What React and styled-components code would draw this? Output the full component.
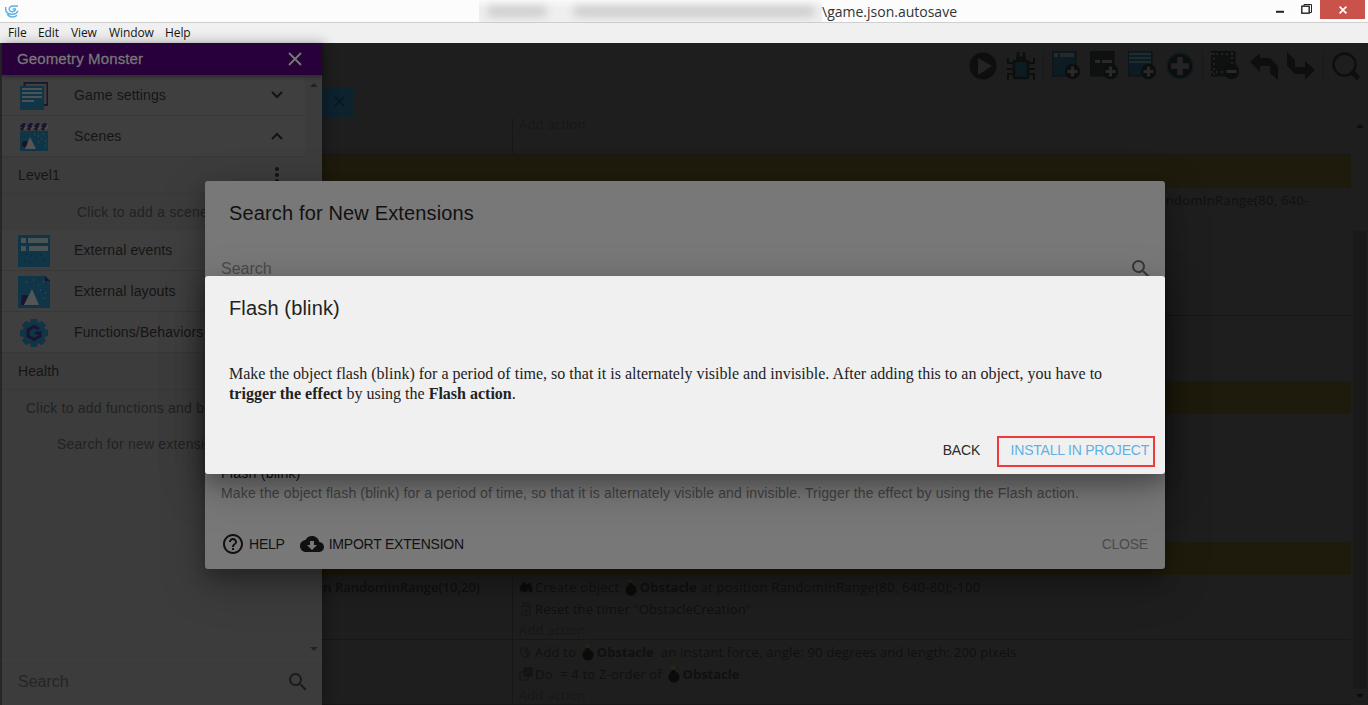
import React from 'react';
import styled, { createGlobalStyle } from 'styled-components';

const sans = '"Liberation Sans", Arial, sans-serif';
const serif = '"Liberation Serif", "Times New Roman", serif';
const ui = '"Open Sans", "Noto Sans", sans-serif';

const Global = createGlobalStyle`
  * { box-sizing: border-box; }
  body { margin: 0; background: #1e1e1e; overflow: hidden; }
  button { font: inherit; border: 0; padding: 0; background: none; }
`;

const Window = styled.div`
  position: relative;
  width: 1368px;
  height: 705px;
  display: flex;
  flex-direction: column;
  overflow: hidden;
  font-family: ${sans};
`;
const TitleBar = styled.header`
  height: 22px;
  flex: none;
  display: flex;
  align-items: flex-start;
  background: #fcfcfc;
  padding-left: 5px;
`;
const LogoSlot = styled.div`
  width: 474px;
  padding-top: 5px;
  svg { display: block; }
`;
const HiddenPath = styled.div`
  width: 343px;
  height: 23px;
  display: flex;
  align-items: center;
  gap: 26px;
  padding-left: 8px;
  background: linear-gradient(#fafafa, #efefef 35%, #efefef);
  overflow: hidden;
`;
const Smudge = styled.span`
  width: ${(p) => p.$w}px;
  height: 11px;
  border-radius: 5px;
  background: #cdcdcd;
  filter: blur(4px);
`;
const FileName = styled.span`
  flex: 1;
  font: 14px/23px ${ui};
  color: #333;
  white-space: nowrap;
`;
const WindowButtons = styled.div`
  display: flex;
  svg { display: block; }
`;
const CloseButton = styled.button`
  width: 45px;
  height: 19px;
  margin-right: 3px;
  display: flex;
  align-items: center;
  justify-content: center;
  background: #c9524a;
`;
const MenuBar = styled.nav`
  height: 21px;
  flex: none;
  display: flex;
  background: #f0f0f0;
  border-top: 1px solid #cfcfcf;
  padding-left: 8px;
`;
const MenuItem = styled.span`
  width: ${(p) => p.$w}px;
  font: 12px/19px ${ui};
  letter-spacing: -0.1px;
  color: #161616;
`;

const Editor = styled.main`
  flex: 1;
  display: flex;
  flex-direction: column;
  background: #1e1e1e;
`;
const Toolbar = styled.div`
  height: 44px;
  flex: none;
  display: flex;
  align-items: center;
  justify-content: flex-end;
  padding: 1px 8px 0 0;
  svg { display: block; }
`;
const Tool = styled.span`
  width: ${(p) => p.$w || 38}px;
`;
const Divider = styled.span`
  width: 1px;
  height: 31px;
  margin: 0 ${(p) => p.$r}px 0 ${(p) => p.$l}px;
  background: #191919;
`;
const TabStrip = styled.div`
  height: 31px;
  flex: none;
  padding-left: 322px;
`;
const Tab = styled.div`
  width: 32px;
  height: 30px;
  padding: 9px 0 0 12px;
  background: #0c222d;
  svg { display: block; }
`;
const SheetArea = styled.div`
  flex: 1;
  display: flex;
  min-height: 0;
`;
const Sheet = styled.div`
  width: 1351px;
  display: flex;
  flex-direction: column;
`;
const Band = styled.div`
  height: 33px;
  flex: none;
  background: #1f1b0c;
`;
const EventRow = styled.div`
  height: ${(p) => p.$h}px;
  flex: none;
  display: flex;
  border-bottom: 1px solid ${(p) => (p.$line ? '#171717' : 'transparent')};
  font: 13px/22px ${ui};
  color: #101010;
`;
const Conditions = styled.div`
  width: 513px;
  flex: none;
  border-right: 1px solid #171717;
  padding: 1px 32px 0 0;
  text-align: right;
  font-weight: 600;
`;
const Actions = styled.div`
  flex: 1;
  padding: ${(p) => p.$top || 0}px 0 0 6px;
`;
const Action = styled.div`
  height: 22px;
  display: flex;
  align-items: center;
  white-space: pre;
  letter-spacing: ${(p) => p.$ls || 0}px;
  padding-left: ${(p) => p.$indent || 0}px;
  svg { display: block; flex: none; }
  b { font-weight: 700; letter-spacing: 0; }
`;
const AddAction = styled.div`
  height: 21px;
  line-height: ${(p) => p.$lh || 21}px;
  color: #171717;
  letter-spacing: 0.2px;
`;
const Scrollbar = styled.div`
  flex: 1;
  display: flex;
  flex-direction: column;
  align-items: center;
  padding: 5px 0 5px 0;
`;
const Thumb = styled.div`
  width: 13px;
  height: 458px;
  margin: 103px 0 5px;
  background: #191919;
`;

const Drawer = styled.aside`
  position: absolute;
  left: 0;
  top: 43px;
  width: 322px;
  height: 662px;
  display: flex;
  flex-direction: column;
  border-left: 2px solid #272727;
  background: #3c3c3c;
  box-shadow: 3px 0 12px rgba(0, 0, 0, 0.3);
`;
const DrawerHeader = styled.div`
  height: 32px;
  flex: none;
  display: flex;
  align-items: center;
  justify-content: space-between;
  padding: 0 20px 0 15px;
  background: #28003a;
  box-shadow: 0 2px 4px rgba(0, 0, 0, 0.35);
  color: #777;
  font-size: 15px;
  line-height: 17px;
  letter-spacing: 0.12px;
  -webkit-text-stroke: 0.3px #777;
  z-index: 1;
  svg { display: block; }
`;
const DrawerTitle = styled.span`
  padding-bottom: 2px;
`;
const DrawerBody = styled.div`
  height: 584px;
  flex: none;
  display: flex;
`;
const List = styled.div`
  width: 303px;
`;
const ListScroll = styled.div`
  flex: 1;
  display: flex;
  flex-direction: column;
  justify-content: space-between;
  align-items: center;
  padding: 7px 0 7px;
`;
const Section = styled.div`
  height: 41px;
  display: flex;
  align-items: center;
  background: #3f3f3f;
  border-bottom: 1px solid #383838;
  padding: 0 22px 0 16px;
  font-size: 14px;
  letter-spacing: 0.13px;
  color: #151515;
  svg { display: block; }
`;
const SectionIcon = styled.span`
  width: 56px;
  padding-top: 2px;
  padding-left: ${(p) => p.$inset || 0}px;
`;
const SectionLabel = styled.span`
  flex: 1;
  white-space: nowrap;
`;
const Item = styled.div`
  height: 37px;
  display: flex;
  align-items: center;
  justify-content: space-between;
  padding: 0 26px 0 16px;
  border-bottom: 1px solid #383838;
  font-size: 14px;
  letter-spacing: 0.1px;
  color: #151515;
`;
const Hint = styled.div`
  height: 36px;
  line-height: 37px;
  padding-left: ${(p) => p.$x}px;
  font-size: 14px;
  letter-spacing: ${(p) => p.$ls || 0.25}px;
  color: #222;
  white-space: nowrap;
  overflow: hidden;
`;
const DrawerSearch = styled.div`
  flex: 1;
  display: flex;
  align-items: center;
  justify-content: space-between;
  padding: 0 12px 2px 16px;
  border-top: 1px solid #404040;
  font-size: 16px;
  color: #252525;
`;

const Dialog = styled.section`
  position: absolute;
  left: 205px;
  top: ${(p) => p.$top}px;
  width: 960px;
  height: ${(p) => p.$h}px;
  display: flex;
  flex-direction: column;
  border-radius: 3px;
  background: ${(p) => p.$bg};
  box-shadow: 0 14px 45px rgba(0, 0, 0, 0.25), 0 10px 18px rgba(0, 0, 0, 0.22);
`;
const DialogTitle = styled.h3`
  margin: 0;
  padding: 16px 24px 0;
  font-size: 20px;
  line-height: 32px;
  font-weight: 400;
  color: ${(p) => p.$c};
  letter-spacing: 0.15px;
`;
const SearchField = styled.div`
  display: flex;
  align-items: center;
  justify-content: space-between;
  height: 24px;
  margin-top: 28px;
  padding: 0 12px 0 16px;
  font-size: 16px;
  color: #4a4a4a;
  svg { display: block; }
`;
const Result = styled.div`
  margin-top: 182px;
  padding-left: 16px;
  line-height: 20px;
`;
const ResultName = styled.div`
  font-size: 14px;
  letter-spacing: 0.27px;
  color: #111;
`;
const ResultText = styled.div`
  font-size: 14px;
  letter-spacing: 0.144px;
  color: #414141;
`;
const Footer = styled.div`
  display: flex;
  align-items: center;
  margin-top: auto;
  height: 36px;
  margin-bottom: 7px;
  padding: 0 17px 0 16px;
  font-size: 14px;
  color: #111;
  svg { display: block; }
`;
const FlatButton = styled.button`
  display: flex;
  align-items: center;
  gap: ${(p) => p.$gap || 0}px;
  margin-left: ${(p) => p.$ml || 0};
  letter-spacing: -0.22px;
  color: ${(p) => p.$c || '#111'};
  white-space: nowrap;
`;
const Description = styled.p`
  margin: 40px 24px 0;
  font: 16px/20px ${serif};
  color: #222;
`;
const ConfirmBar = styled.div`
  display: flex;
  align-items: flex-start;
  justify-content: flex-end;
  margin-top: auto;
  padding: 0 10px 7px 0;
  gap: 17px;
  font-size: 14px;
  line-height: 28px;
`;
const Highlight = styled.div`
  width: 158px;
  height: 31px;
  display: flex;
  align-items: center;
  justify-content: flex-end;
  border: 2px solid #ee3a3a;
  padding: 0 4px 3px 0;
`;

const Gdevelop = () => (
  <svg width="14" height="13" viewBox="0 0 14 13" fill="none" stroke="#5fb0e6" strokeWidth="1.5">
    <path d="M13 1H8C5.400 1 4 2.600 4.300 4.500 4.600 6.400 6.500 7 8.200 6.600 9.800 6.200 10.400 5.200 10.300 3.900H7.600" />
    <path d="M.8 2C-.2 6.500 2.500 9 6.500 9.300c3 .2 5.600-1 6.300-3.500M2.200 9c2.200 3.600 7 4 9.800 1.300" />
  </svg>
);
const Minimize = () => <svg width="29" height="20"><path d="M4 11.800h8" stroke="#222" strokeWidth="2" /></svg>;
const Restore = () => (
  <svg width="19" height="20" viewBox="0 0 19 20" fill="none" stroke="#222">
    <path d="M3 6V4.500h7.500v8H9" strokeWidth="1" /><rect x=".8" y="6.200" width="7.400" height="7" strokeWidth="1.400" />
  </svg>
);
const Cross = ({ size, color, width }) => (
  <svg width={size} height={size} viewBox="0 0 14 14"><path d="M1 1l12 12M13 1L1 13" stroke={color} strokeWidth={width} /></svg>
);
const Chevron = ({ up }) => (
  <svg width="12" height="8" viewBox="0 0 12 8" fill="none" stroke="#131313" strokeWidth="2">
    <path d={up ? 'M1 7l5-5 5 5' : 'M1 1l5 5 5-5'} />
  </svg>
);
const Arrow = ({ up, color = '#151515' }) => (
  <svg width="8" height="5"><path d={up ? 'M0 5l4-4 4 4z' : 'M0 0l4 4 4-4z'} fill={color} /></svg>
);
const Dots = () => (
  <svg width="4" height="16" fill="#131313"><circle cx="2" cy="2" r="2" /><circle cx="2" cy="8" r="2" /><circle cx="2" cy="14" r="2" /></svg>
);
const SearchGlyph = ({ color }) => (
  <svg width="24" height="24" viewBox="0 0 24 24" fill={color}>
    <path d="M15.5 14h-.79l-.28-.27A6.471 6.471 0 0 0 16 9.5 6.5 6.5 0 1 0 9.5 16c1.61 0 3.09-.59 4.23-1.57l.27.28v.79l5 4.99L20.49 19l-4.99-5zm-6 0C7.01 14 5 11.99 5 9.5S7.01 5 9.5 5 14 7.01 14 9.5 11.99 14 9.5 14z" />
  </svg>
);
const HelpGlyph = () => (
  <svg width="24" height="24" viewBox="0 0 24 24" fill="#101010">
    <path d="M11 18h2v-2h-2v2zm1-16C6.48 2 2 6.48 2 12s4.48 10 10 10 10-4.480 10-10S17.520 2 12 2zm0 18c-4.410 0-8-3.590-8-8s3.590-8 8-8 8 3.590 8 8-3.590 8-8 8zm0-14c-2.210 0-4 1.790-4 4h2c0-1.100.9-2 2-2s2 .9 2 2c0 2-3 1.750-3 5h2c0-2.250 3-2.500 3-5 0-2.210-1.790-4-4-4z" />
  </svg>
);
const CloudGlyph = () => (
  <svg width="24" height="24" viewBox="0 0 24 24" fill="#101010">
    <path d="M19.350 10.040C18.670 6.590 15.640 4 12 4 9.110 4 6.600 5.640 5.350 8.040 2.340 8.360 0 10.910 0 14c0 3.310 2.690 6 6 6h13c2.760 0 5-2.240 5-5 0-2.640-2.050-4.780-4.650-4.960zM17 13l-5 5-5-5h3V9h4v4h3z" />
  </svg>
);

const SettingsIcon = () => (
  <svg width="28" height="28">
    <path d="M4.500 4V.8h23V23H24" fill="none" stroke="#1e1430" strokeWidth="2" />
    <rect y="4" width="24" height="24" fill="#0f3547" />
    <path d="M2 7h20M2 11h20M2 15h20M2 19h12" stroke="#4c5355" strokeWidth="2" />
  </svg>
);
const ScenesIcon = () => (
  <svg width="28" height="28">
    <rect y="8" width="28" height="20" fill="#0f3547" />
    <path d="M1 7l3-3-2-1 3-3M8 7l3-3-2-1 3-3M15 7l3-3-2-1 3-3M22 7l3-3-2-1 3-3" fill="none" stroke="#1c1330" strokeWidth="3" />
    <path d="M4 6l3-3M11 6l3-3M18 6l3-3M25 6l3-3" stroke="#555" strokeWidth="1.500" />
    <circle cx="5" cy="21" r="3" fill="#1a1226" /><path d="M5 26l5-12 6 12z" fill="#555" />
    <path d="M14 11h1M18 13h1M23 11h1M21 16h1M25 18h1M18 19h1M25 23h1" stroke="#4a5b63" />
  </svg>
);
const EventsIcon = () => (
  <svg width="32" height="32">
    <rect width="32" height="32" fill="#0f3547" />
    <path d="M3 3h5v5H3zM10 3h20v5H10zM3 11h5v5H3zM11 11h19v5H11z" fill="#4c5355" />
    <path d="M3 20h1M8 19h1M13 20h1M18 23h1M6 26h1M12 27h1M22 20h1M26 25h1" stroke="#0a1d28" />
  </svg>
);
const LayoutsIcon = () => (
  <svg width="32" height="32">
    <path d="M0 0h27l5 5v27H0z" fill="#0f3547" /><path d="M27 0v5h5z" fill="#1c1330" />
    <path d="M4 19h6l-4 10H3z" fill="#1c1330" /><path d="M6 29l8-16 7 16z" fill="#555" />
    <path d="M8 6h1M15 4h1M20 9h1M25 6h1M22 14h1M27 17h1M25 22h1" stroke="#4a5b63" />
  </svg>
);
const FunctionsIcon = () => (
  <svg width="28" height="28" viewBox="-14 -14 28 28">
    <g fill="#0f3547">
      <circle r="11.500" />
      {[0, 45, 90, 135].map((a) => <rect key={a} x="-3.500" y="-14" width="7" height="28" rx="1" transform={`rotate(${a})`} />)}
    </g>
    <path d="M5-4L0-6.500-6-3v6L0 6.500 6 3V0H1" fill="none" stroke="#1c1330" strokeWidth="3" />
  </svg>
);

const ink = '#0d0f0e';
const teal = '#0d1c22';
const Play = () => (
  <svg width="28" height="28"><circle cx="14" cy="14" r="13.500" fill={ink} /><path d="M9 6l14 8-14 9z" fill="#232323" /></svg>
);
const Bug = () => (
  <svg width="28" height="28" fill="none" stroke={ink} strokeWidth="2">
    <rect x="7" y="9" width="14" height="17" rx="1" fill={teal} strokeWidth="2.500" />
    <path d="M11 0v8M17 0v8" strokeWidth="2.500" /><path d="M9 6h10" strokeWidth="3" />
    <path d="M7 11H1V6M21 11h6V6M7 17H0M21 17h7M7 22H1v6M21 22h6v6" />
  </svg>
);
const Sheets = ({ kind }) => (
  <svg width="28" height="29">
    <rect width="24" height="25" fill={kind === 'sub' || kind === 'delete' ? '#0f1010' : teal} stroke={ink} />
    {kind === 'event' && <path d="M2 2h4v4H2zM8 2h14v4H8z" fill="#252b2d" />}
    {kind === 'sub' && <path d="M5 9h5v3H5zM12 9h10v3H12z" fill="#292929" />}
    {kind === 'comment' && <path d="M1 3h22M1 7h22M1 11h22" stroke="#253035" strokeWidth="1.300" />}
    {kind === 'delete' && <path d="M3 2v22M0 3h24M0 21h16M21 1v13" stroke="#272727" strokeDasharray="2 3" strokeWidth="1.500" />}
    <circle cx="20.500" cy="20.500" r="7.700" fill={ink} />
    <path d={kind === 'delete' ? 'M15.500 20.500h10' : 'M15.500 20.500h10M20.500 15.500v10'} stroke="#292929" strokeWidth="3" />
  </svg>
);
const AddCircle = () => (
  <svg width="28" height="28"><circle cx="14" cy="14" r="12.800" fill={ink} stroke={teal} strokeWidth="1.500" /><path d="M5 14h18M14 5v18" stroke="#242326" strokeWidth="5.500" /></svg>
);
const Undo = ({ flip }) => (
  <svg width="28" height="28" fill={ink}>
    {flip
      ? <path d="M0 0l8 8v7h10V9l10 9-10 10v-6H8L0 14z" />
      : <path d="M0 10L10 1v5h10l8 8v14l-8-7v-7H10v6z" />}
  </svg>
);
const Zoomer = () => (
  <svg width="28" height="28"><circle cx="12.500" cy="12.500" r="11" fill="none" stroke={ink} strokeWidth="2.500" /><path d="M21 21l4 4" stroke={ink} strokeWidth="5" strokeLinecap="round" /></svg>
);
const Bomb = () => (
  <svg width="17" height="17" viewBox="-1.500 0 17 17"><path d="M6 0v4M3 1l5 1" stroke="#30260a" strokeWidth="1.500" /><circle cx="6.500" cy="11" r="5.500" fill="#0a0c0b" /><path d="M4 4h4v4H4z" fill="#0a0c0b" /></svg>
);
const ActionIcon = ({ kind }) => (
  <svg width="16" height="14" fill="none" stroke="#0e100f">
    {kind === 'create' && <path d="M2 6l3-4 3 3 3-2 2 5v4h-3V9H8v3H5v-1H1V7z" fill="#0a0c0b" />}
    {kind === 'timer' && <path d="M3 4h8v9H3zM4 4V1h6v3M7 7v4M5 9h4" stroke="#131413" />}
    {kind === 'force' && <path d="M2 3h5l4 4-2 5H4L2 8zM5 5l4 5M8 4v7" stroke="#121312" />}
    {kind === 'order' && <><path d="M1 5h8v8H1z" stroke="#131413" /><path d="M5 1h8v8H5z" fill="#0e181c" /></>}
  </svg>
);

const SearchDialog = () => (
  <Dialog $top={181} $h={388} $bg="#787878">
    <DialogTitle $c="#111">Search for New Extensions</DialogTitle>
    <SearchField>Search<SearchGlyph color="#373737" /></SearchField>
    <Result>
      <ResultName>Flash (blink)</ResultName>
      <ResultText>
        Make the object flash (blink) for a period of time, so that it is alternately visible and invisible. Trigger the effect by using the Flash action.
      </ResultText>
    </Result>
    <Footer>
      <FlatButton $gap={4}><HelpGlyph />HELP</FlatButton>
      <FlatButton $gap={5} $ml="15px"><CloudGlyph />IMPORT EXTENSION</FlatButton>
      <FlatButton $ml="auto" $c="#4a4a4a">CLOSE</FlatButton>
    </Footer>
  </Dialog>
);

const InstallDialog = () => (
  <Dialog $top={276} $h={198} $bg="#f0f0f0">
    <DialogTitle $c="#222">Flash (blink)</DialogTitle>
    <Description>
      Make the object flash (blink) for a period of time, so that it is alternately visible and invisible. After adding this to an object, you have to <b>trigger the effect</b> by using the <b>Flash action</b>.
    </Description>
    <ConfirmBar>
      <FlatButton $c="#2b2b2b">BACK</FlatButton>
      <Highlight><FlatButton $c="#5fb0e6">INSTALL IN PROJECT</FlatButton></Highlight>
    </ConfirmBar>
  </Dialog>
);

const ProjectDrawer = () => (
  <Drawer>
    <DrawerHeader><DrawerTitle>Geometry Monster</DrawerTitle><Cross size={14} color="#777" width={1.8} /></DrawerHeader>
    <DrawerBody>
      <List>
        <Section><SectionIcon $inset={2}><SettingsIcon /></SectionIcon><SectionLabel>Game settings</SectionLabel><Chevron /></Section>
        <Section><SectionIcon $inset={2}><ScenesIcon /></SectionIcon><SectionLabel>Scenes</SectionLabel><Chevron up /></Section>
        <Item>Level1<Dots /></Item>
        <Hint $x={75}>Click to add a scene</Hint>
        <Section><SectionIcon><EventsIcon /></SectionIcon><SectionLabel>External events</SectionLabel></Section>
        <Section><SectionIcon><LayoutsIcon /></SectionIcon><SectionLabel>External layouts</SectionLabel></Section>
        <Section><SectionIcon $inset={2}><FunctionsIcon /></SectionIcon><SectionLabel>Functions/Behaviors</SectionLabel></Section>
        <Item>Health</Item>
        <Hint $x={24} $ls={0.22}>Click to add functions and behaviors</Hint>
        <Hint $x={55} $ls={0.22}>Search for new extensions</Hint>
      </List>
      <ListScroll><Arrow up color="#222" /><Arrow color="#222" /></ListScroll>
    </DrawerBody>
    <DrawerSearch>Search<SearchGlyph color="#1b1b1b" /></DrawerSearch>
  </Drawer>
);

const EventsEditor = () => (
  <Editor>
    <Toolbar>
      <Tool><Play /></Tool><Tool $w={28}><Bug /></Tool>
      <Divider $l={8} $r={8} />
      <Tool><Sheets kind="event" /></Tool><Tool><Sheets kind="sub" /></Tool><Tool><Sheets kind="comment" /></Tool><Tool $w={28}><AddCircle /></Tool>
      <Divider $l={8} $r={8} />
      <Tool $w={39}><Sheets kind="delete" /></Tool><Tool $w={37}><Undo /></Tool><Tool $w={28}><Undo flip /></Tool>
      <Divider $l={8} $r={8} />
      <Tool $w={28}><Zoomer /></Tool>
    </Toolbar>
    <TabStrip><Tab><Cross size={11} color="#08171f" width={2} /></Tab></TabStrip>
    <SheetArea>
      <Sheet>
        <EventRow $h={37} $line><Conditions /><Actions><AddAction $lh={12}>Add action</AddAction></Actions></EventRow>
        <Band />
        <EventRow $h={128} $line><Conditions /><Actions $top={1}><Action $ls={0.3} $indent={631}>RandomInRange(80, 640-</Action></Actions></EventRow>
        <EventRow $h={65}><Conditions /></EventRow>
        <Band />
        <EventRow $h={128}><Conditions /></EventRow>
        <Band />
        <EventRow $h={65} $line>
          <Conditions>timer is greater than RandomInRange(10,20)</Conditions>
          <Actions $top={1}>
            <Action $ls={0.28}><ActionIcon kind="create" />Create object <Bomb /><b>Obstacle</b> at position RandomInRange(80, 640-80);-100</Action>
            <Action $ls={0.15}><ActionIcon kind="timer" />Reset the timer "ObstacleCreation"</Action>
            <AddAction>Add action</AddAction>
          </Actions>
        </EventRow>
        <EventRow $h={65} $line>
          <Conditions />
          <Actions $top={1}>
            <Action $ls={0.21}><ActionIcon kind="force" />Add to <Bomb /><b>Obstacle</b>  an instant force, angle: 90 degrees and length: 200 pixels</Action>
            <Action $ls={0.22}><ActionIcon kind="order" />Do  = 4 to Z-order of <Bomb /><b>Obstacle</b></Action>
            <AddAction>Add action</AddAction>
          </Actions>
        </EventRow>
      </Sheet>
      <Scrollbar><Arrow up color="#0c0c0c" /><Thumb /><Arrow color="#0c0c0c" /></Scrollbar>
    </SheetArea>
  </Editor>
);

export default function App() {
  return (
    <Window>
      <Global />
      <TitleBar>
        <LogoSlot><Gdevelop /></LogoSlot>
        <HiddenPath><Smudge $w={60} /><Smudge $w={242} /></HiddenPath>
        <FileName>\game.json.autosave</FileName>
        <WindowButtons><Minimize /><Restore /></WindowButtons>
        <CloseButton><Cross size={8} color="#fff" width={3} /></CloseButton>
      </TitleBar>
      <MenuBar>
        <MenuItem $w={30}>File</MenuItem><MenuItem $w={33}>Edit</MenuItem><MenuItem $w={38}>View</MenuItem><MenuItem $w={56}>Window</MenuItem><MenuItem $w={40}>Help</MenuItem>
      </MenuBar>
      <EventsEditor />
      <ProjectDrawer />
      <SearchDialog />
      <InstallDialog />
    </Window>
  );
}
